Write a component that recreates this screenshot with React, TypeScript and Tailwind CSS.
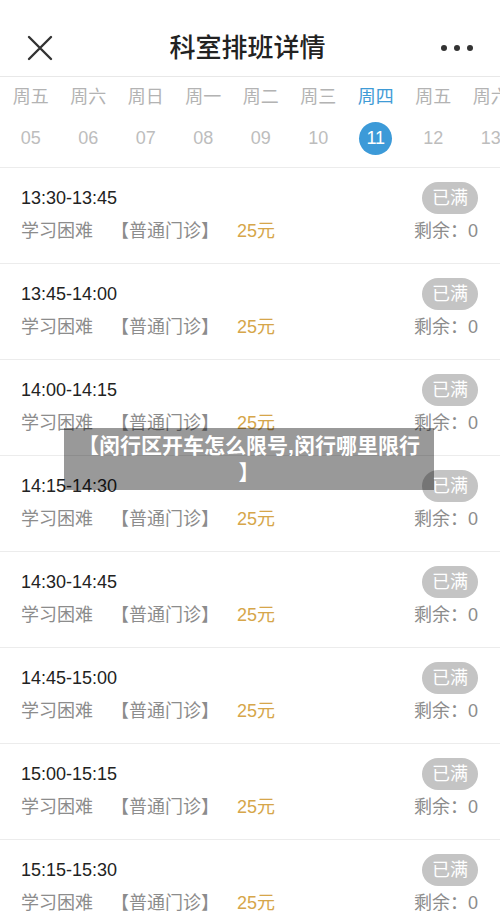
import React from "react";

const FONT = { fontFamily: '"Liberation Sans", "Noto Sans CJK SC", sans-serif' };

const days = [
  { w: "周五", d: "05" },
  { w: "周六", d: "06" },
  { w: "周日", d: "07" },
  { w: "周一", d: "08" },
  { w: "周二", d: "09" },
  { w: "周三", d: "10" },
  { w: "周四", d: "11", active: true },
  { w: "周五", d: "12" },
  { w: "周六", d: "13" },
];

const slots = [
  "13:30-13:45",
  "13:45-14:00",
  "14:00-14:15",
  "14:15-14:30",
  "14:30-14:45",
  "14:45-15:00",
  "15:00-15:15",
  "15:15-15:30",
];

function Slot({ time }: { time: string }) {
  return (
    <div className="h-[96px] shrink-0 border-b border-[#ececec] pl-[21px] pr-[22px] pt-[14px]">
      <div className="flex h-[32px] items-center justify-between">
        <span className="text-[18px] text-[#222]">{time}</span>
        <span className="flex h-[32px] items-center rounded-full bg-[#c4c4c4] px-[10px] text-[18px] text-white">已满</span>
      </div>
      <div className="flex h-[34px] items-center justify-between">
        <div className="flex items-center gap-[18px] text-[18px] text-[#8c8c8c]">
          <span>学习困难</span>
          <span>【普通门诊】</span>
          <span className="text-[#d6a64a]">25元</span>
        </div>
        <span className="text-[18px] text-[#8c8c8c]">剩余：0</span>
      </div>
    </div>
  );
}

export default function App() {
  return (
    <div className="relative flex h-[918px] w-[500px] flex-col overflow-hidden bg-white" style={FONT}>
      {/* Header */}
      <div className="shrink-0 border-b border-[#e8e8e8] pt-5">
        <div className="flex h-[56px] items-center justify-between px-[26px]">
          <svg width="28" height="28" viewBox="0 0 28 28" className="text-[#333]">
            <path d="M3 3 L25 25 M25 3 L3 25" stroke="currentColor" strokeWidth="2.4" strokeLinecap="round" />
          </svg>
          <h1 className="text-[26px] font-medium text-[#222]">科室排班详情</h1>
          <div className="flex items-center gap-[7px] pr-[1px]">
            <span className="h-[6px] w-[6px] rounded-full bg-[#333]" />
            <span className="h-[6px] w-[6px] rounded-full bg-[#333]" />
            <span className="h-[6px] w-[6px] rounded-full bg-[#333]" />
          </div>
        </div>
      </div>

      {/* Date strip */}
      <div className="flex h-[91px] shrink-0 overflow-hidden border-b border-[#ececec] pl-[2px]">
        {days.map((x, i) => (
          <div key={i} className="flex w-[57.5px] shrink-0 flex-col items-center">
            <div className={`flex h-[38px] items-center pt-[2px] text-[18px] ${x.active ? "text-[#3f9bd6]" : "text-[#b3b3b3]"}`}>
              {x.w}
            </div>
            <div className="flex h-[46px] items-center">
              {x.active ? (
                <span className="flex h-[33px] w-[33px] items-center justify-center rounded-full bg-[#3c9ad8] text-[18px] text-white">{x.d}</span>
              ) : (
                <span className="text-[18px] text-[#bdbdbd]">{x.d}</span>
              )}
            </div>
          </div>
        ))}
      </div>

      {/* Slots */}
      <div className="flex flex-col">
        {slots.map((t) => (
          <Slot key={t} time={t} />
        ))}
      </div>

      {/* Watermark banner */}
      <div className="absolute left-[64px] top-[428px] flex h-[62px] w-[370px] flex-col items-center justify-center bg-black/40 text-center text-[21px] font-bold leading-[27px] text-white">
        <span>【闵行区开车怎么限号,闵行哪里限行</span>
        <span>】</span>
      </div>
    </div>
  );
}
